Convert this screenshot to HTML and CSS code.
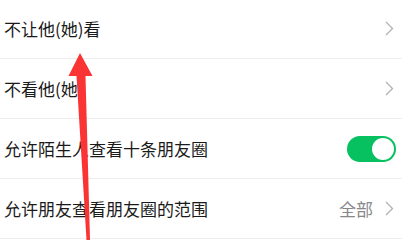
FILE: index.html
```html
<!DOCTYPE html>
<html lang="zh-CN">
<head>
<meta charset="utf-8">
<link rel="stylesheet" href="styles.css">
</head>
<body>
<div class="page">
  <ul class="list">
    <li class="row">
      <span class="label">不让他(她)看</span>
      <span class="trail"><svg class="chev" viewBox="0 0 9 15" width="9" height="15"><path d="M1 1 L7.5 7.5 L1 14" /></svg></span>
    </li>
    <li class="row">
      <span class="label">不看他(她)</span>
      <span class="trail"><svg class="chev" viewBox="0 0 9 15" width="9" height="15"><path d="M1 1 L7.5 7.5 L1 14" /></svg></span>
    </li>
    <li class="row">
      <span class="label">允许陌生人查看十条朋友圈</span>
      <span class="trail"><span class="switch"><span class="knob"></span></span></span>
    </li>
    <li class="row">
      <span class="label">允许朋友查看朋友圈的范围</span>
      <span class="trail"><span class="value">全部</span><svg class="chev" viewBox="0 0 9 15" width="9" height="15"><path d="M1 1 L7.5 7.5 L1 14" /></svg></span>
    </li>
  </ul>
  <svg class="arrow" viewBox="0 0 407 241" width="407" height="241">
    <polygon points="80,54 92.5,77 85.5,77 90,241 86.5,241 76.5,77 68.5,77" />
  </svg>
</div>
</body>
</html>
```

FILE: styles.css
```css
html, body {
  margin: 0;
  padding: 0;
  background: #ffffff;
}
body {
  font-family: "Noto Sans CJK SC", "Noto Sans", sans-serif;
  color: #1a1a1a;
  width: 407px;
  height: 241px;
  overflow: hidden;
}
.page {
  position: relative;
  width: 407px;
  height: 241px;
}
.list {
  list-style: none;
  margin: -1px 0 0 0;
  padding: 0;
}
.row {
  display: flex;
  align-items: center;
  justify-content: space-between;
  height: 59px;
  margin-right: 5px;
  padding-left: 4px;
  border-bottom: 1px solid #ededed;
  font-size: 17px;
  line-height: 1;
}
.label {
  white-space: nowrap;
}
.trail {
  display: flex;
  align-items: center;
}
.chev {
  display: block;
  margin-right: 8px;
}
.chev path {
  fill: none;
  stroke: #b2b2b2;
  stroke-width: 1.3;
}
.value {
  color: #888888;
  font-size: 17px;
  margin-right: 12px;
}
.switch {
  display: block;
  width: 49px;
  height: 26px;
  border-radius: 13px;
  background: #07c160;
  position: relative;
  margin-right: 6px;
}
.knob {
  position: absolute;
  top: 2px;
  right: 2px;
  width: 22px;
  height: 22px;
  border-radius: 50%;
  background: #ffffff;
}
.arrow {
  position: absolute;
  left: 0;
  top: 0;
  pointer-events: none;
}
.arrow polygon {
  fill: #fa3434;
}
```
